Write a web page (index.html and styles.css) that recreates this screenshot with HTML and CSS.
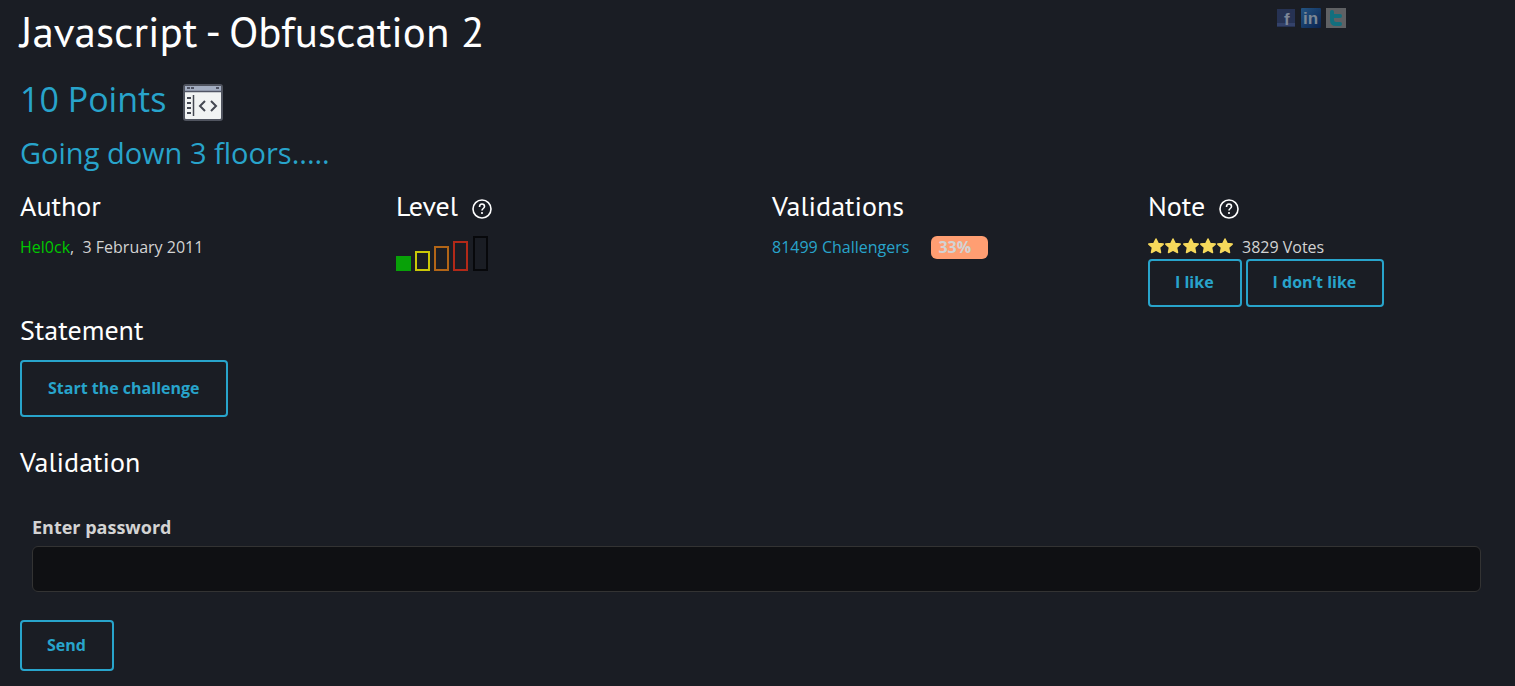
FILE: index.html
```html
<!DOCTYPE html>
<html lang="en">
<head>
<meta charset="utf-8">
<title>Javascript - Obfuscation 2</title>
<link rel="stylesheet" href="styles.css">
</head>
<body>
<main class="page">
  <header class="top">
    <h1 class="title">Javascript - Obfuscation 2</h1>
    <nav class="share" aria-label="Share">
      <a href="#" aria-label="Facebook"><svg width="20" height="20" viewBox="0 0 20 20"><rect x="1" y="1" width="18" height="18" fill="#263253"/><rect x="1" y="15" width="18" height="3" fill="#34426a"/><text x="8" y="17" class="logo-f">f</text></svg></a>
      <a href="#" aria-label="LinkedIn"><svg width="20" height="20" viewBox="0 0 20 20"><defs><linearGradient id="li" x1="0" y1="0" x2="1" y2="1"><stop offset="0" stop-color="#245482"/><stop offset="1" stop-color="#0a2350"/></linearGradient></defs><rect width="20" height="20" rx="1" fill="url(#li)"/><text x="2" y="16" class="logo-in">in</text></svg></a>
      <a href="#" aria-label="Twitter"><svg width="20" height="20" viewBox="0 0 20 20"><rect width="20" height="20" fill="#5f6164"/><path d="M6 4v8q0 4 4 4h4M6 8h8" fill="none" stroke="#126f7e" stroke-width="4" stroke-linecap="round" stroke-linejoin="round"/></svg></a>
    </nav>
  </header>

  <h2 class="points">10 Points
    <svg width="40" height="38" viewBox="0 0 40 38" aria-hidden="true">
      <rect x="1" y="1" width="38" height="35" rx="2" fill="#f1f3f3" stroke="#50545f" stroke-width="2"/>
      <path d="M2 2h36v5H2z" fill="#a3adc1"/>
      <path d="M2 7.500h36" stroke="#505464" stroke-width="1.500"/>
      <path d="M4 4h3m1 0h3m22 0h3" stroke="#505464" stroke-width="2"/>
      <path d="M4 14h4M4 19h4M4 24h4M4 29h4" stroke="#454852" stroke-width="2"/>
      <path d="M10.500 11v21" stroke="#454852" stroke-width="1.500"/>
      <path d="M22 17l-5 5 5 5M28 17l5 5-5 5" fill="none" stroke="#454852" stroke-width="2"/>
    </svg>
  </h2>
  <p class="subtitle">Going down 3 floors.....</p>

  <div class="facts">
    <section>
      <h3 class="heading">Author</h3>
      <p class="line"><a class="author" href="#">Hel0ck</a>,&nbsp; 3 February 2011</p>
    </section>
    <section>
      <h3 class="heading">Level <a class="help" href="#" aria-label="About levels"><svg width="20" height="20" viewBox="0 0 20 20"><circle cx="10" cy="10" r="9"/><path d="M7.500 8q0-3 2.500-3t2.500 2.500c0 2-2.500 2-2.500 4M10 13v2"/></svg></a></h3>
      <div class="level" role="img" aria-label="Very easy">
        <span class="bar bar-1"></span><span class="bar bar-2"></span><span class="bar bar-3"></span><span class="bar bar-4"></span><span class="bar bar-5"></span>
      </div>
    </section>
    <section>
      <h3 class="heading">Validations</h3>
      <p class="line"><a class="link" href="#">81499 Challengers</a><span class="rate">33%</span></p>
    </section>
    <section>
      <h3 class="heading">Note <a class="help" href="#" aria-label="About notes"><svg width="20" height="20" viewBox="0 0 20 20"><circle cx="10" cy="10" r="9"/><path d="M7.500 8q0-3 2.500-3t2.500 2.500c0 2-2.500 2-2.500 4M10 13v2"/></svg></a></h3>
      <div class="line votes">
        <svg width="86" height="18" viewBox="0 0 86 18" role="img" aria-label="5 stars">
          <defs><path id="star" d="M8 1l2.200 4.500 5 .6-3.700 3.400 1 5L8 12.200 3.500 14.500l1-5L.8 6.100l5-.6z"/></defs>
          <g fill="#f6d95b" stroke="#f6d95b" stroke-width="1.500" stroke-linejoin="round"><use href="#star"/><use href="#star" x="17"/><use href="#star" x="35"/><use href="#star" x="52"/><use href="#star" x="69"/></g>
        </svg>
        <span>3829 Votes</span>
      </div>
      <div class="actions">
        <button class="button" type="button">I like</button>
        <button class="button" type="button">I don’t like</button>
      </div>
    </section>
  </div>

  <section class="statement">
    <h3 class="heading">Statement</h3>
    <a class="button button-start" href="#">Start the challenge</a>
  </section>

  <section>
    <h3 class="heading">Validation</h3>
    <form class="form">
      <div class="field">
        <label for="password">Enter password</label>
        <input id="password" type="text">
      </div>
      <button class="button button-send" type="submit">Send</button>
    </form>
  </section>
</main>
</body>
</html>
```
FILE: styles.css
```css
* { box-sizing: border-box; }

body {
  margin: 0;
  background: #1a1d24;
  color: #d3d3d3;
  font: 16px/24px "Open Sans", sans-serif;
}

a { color: inherit; text-decoration: none; }
h1, h2, h3, p { margin: 0; font-weight: 400; }
svg { flex: none; display: block; }

.page { padding: 0 11px 16px 20px; }

.top { display: flex; justify-content: space-between; }
.title, .heading { color: #fff; font-family: "PT Sans", Lato, sans-serif; }
.title { font-size: 43px; line-height: 62px; }
.share { display: flex; align-items: center; gap: 5px; height: 20px; margin: 8px 158px 0 0; }
.logo-f { font: bold 17px "Liberation Sans", sans-serif; fill: #7d8697; }
.logo-in { font: bold 17px "Liberation Sans", sans-serif; fill: #7b8794; }

.points, .subtitle, .link { color: #28a4cb; }
.points { display: flex; align-items: center; gap: 17px; margin-top: 13px; font-size: 34px; line-height: 48px; }
.points svg { margin-top: 8px; }
.subtitle { margin-top: 8px; font-size: 29px; line-height: 44px; }

.facts { display: grid; grid-template-columns: repeat(4, 1fr); column-gap: 20px; margin-top: 11px; }
.heading { display: flex; align-items: center; gap: 14px; font-size: 28px; line-height: 40px; }
.facts .heading { margin-bottom: 9px; }
.help { padding-top: 5px; }
.help svg { fill: none; stroke: #fff; stroke-width: 1.6; }
.author { color: #00c800; }
.line { min-height: 24px; }

.level { display: flex; align-items: flex-end; gap: 4px; padding-top: 1px; }
.bar { width: 15px; border: 2px solid; }
.bar-1 { height: 15px; color: #08a108; background: #08a108; }
.bar-2 { height: 20px; color: #cbc807; }
.bar-3 { height: 25px; color: #b26517; }
.bar-4 { height: 30px; color: #b22918; }
.bar-5 { height: 35px; margin-left: 1px; color: #07080b; }

.rate {
  display: inline-block;
  width: 57px;
  margin-left: 22px;
  padding-left: 7px;
  border-radius: 6px;
  background: #ff9e72;
  font-weight: 700;
  line-height: 23px;
}

.votes { display: flex; align-items: center; gap: 8px; }
.actions { display: flex; gap: 4px; }

.button {
  display: inline-block;
  padding: 11px 26px 13px 25px;
  border: 2px solid #28a4cb;
  border-radius: 4px;
  background: transparent;
  color: #28a4cb;
  font: 700 16px/20px "Open Sans", sans-serif;
}
.button-start { padding: 16px 26px 17px; }
.button-send { padding-top: 13px; padding-bottom: 14px; }

.statement { display: flex; flex-direction: column; align-items: flex-start; gap: 10px; margin: 3px 0 25px; }

.field { display: flex; flex-direction: column; margin: 33px 23px 28px 12px; }
.field label { font-size: 18px; font-weight: 700; line-height: 24px; margin-bottom: 7px; }
.field input {
  width: 100%;
  height: 46px;
  padding: 0 12px;
  border: 1px solid #333;
  border-radius: 6px;
  background: #0f1013;
  color: inherit;
  font: inherit;
}
```
